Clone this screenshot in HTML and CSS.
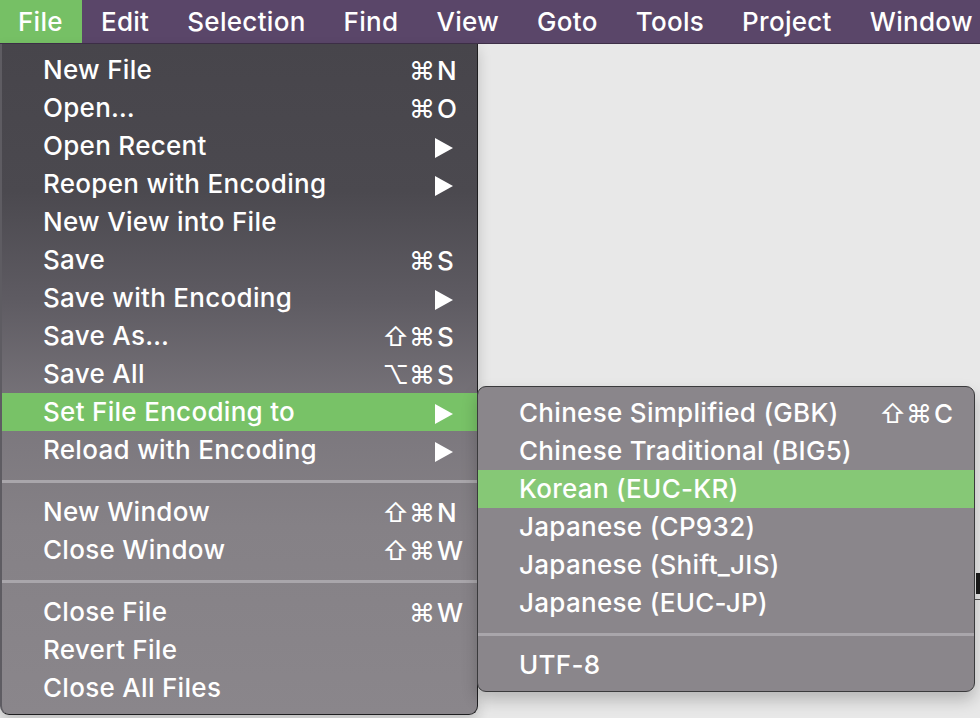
FILE: index.html
```html
<!DOCTYPE html>
<html>
<head>
<meta charset="utf-8">
<link rel="stylesheet" href="styles.css">
</head>
<body>
<div class="menubar">
  <span class="mb-item active">File</span>
  <span class="mb-item">Edit</span>
  <span class="mb-item">Selection</span>
  <span class="mb-item">Find</span>
  <span class="mb-item">View</span>
  <span class="mb-item">Goto</span>
  <span class="mb-item">Tools</span>
  <span class="mb-item">Project</span>
  <span class="mb-item">Window</span>
</div>
<div class="desk">
  <div class="edge-mark"></div>
  <div class="edge-line"></div>

  <div class="menu file-menu">
    <div class="row"><span class="label">New File</span><span class="mods">⌘</span><span class="key">N</span></div>
    <div class="row"><span class="label">Open…</span><span class="mods">⌘</span><span class="key">O</span></div>
    <div class="row"><span class="label">Open Recent</span><span class="mods"></span><span class="key"><i class="arrow"></i></span></div>
    <div class="row"><span class="label">Reopen with Encoding</span><span class="mods"></span><span class="key"><i class="arrow"></i></span></div>
    <div class="row"><span class="label">New View into File</span><span class="mods"></span><span class="key"></span></div>
    <div class="row"><span class="label">Save</span><span class="mods">⌘</span><span class="key">S</span></div>
    <div class="row"><span class="label">Save with Encoding</span><span class="mods"></span><span class="key"><i class="arrow"></i></span></div>
    <div class="row"><span class="label">Save As…</span><span class="mods">⇧⌘</span><span class="key">S</span></div>
    <div class="row"><span class="label">Save All</span><span class="mods">⌥⌘</span><span class="key">S</span></div>
    <div class="row hl"><span class="label">Set File Encoding to</span><span class="mods"></span><span class="key"><i class="arrow"></i></span></div>
    <div class="row"><span class="label">Reload with Encoding</span><span class="mods"></span><span class="key"><i class="arrow"></i></span></div>
    <div class="sep"></div>
    <div class="row"><span class="label">New Window</span><span class="mods">⇧⌘</span><span class="key">N</span></div>
    <div class="row"><span class="label">Close Window</span><span class="mods">⇧⌘</span><span class="key">W</span></div>
    <div class="sep"></div>
    <div class="row"><span class="label">Close File</span><span class="mods">⌘</span><span class="key">W</span></div>
    <div class="row"><span class="label">Revert File</span><span class="mods"></span><span class="key"></span></div>
    <div class="row"><span class="label">Close All Files</span><span class="mods"></span><span class="key"></span></div>
  </div>

  <div class="menu sub-menu">
    <div class="row"><span class="label">Chinese Simplified (GBK)</span><span class="mods">⇧⌘</span><span class="key">C</span></div>
    <div class="row"><span class="label">Chinese Traditional (BIG5)</span><span class="mods"></span><span class="key"></span></div>
    <div class="row hl"><span class="label">Korean (EUC-KR)</span><span class="mods"></span><span class="key"></span></div>
    <div class="row"><span class="label">Japanese (CP932)</span><span class="mods"></span><span class="key"></span></div>
    <div class="row"><span class="label">Japanese (Shift_JIS)</span><span class="mods"></span><span class="key"></span></div>
    <div class="row"><span class="label">Japanese (EUC-JP)</span><span class="mods"></span><span class="key"></span></div>
    <div class="sep"></div>
    <div class="row"><span class="label">UTF-8</span><span class="mods"></span><span class="key"></span></div>
  </div>
</div>
</body>
</html>
```

FILE: styles.css
```css
* { box-sizing: border-box; }
html, body { margin: 0; padding: 0; }
body {
  width: 980px;
  height: 718px;
  overflow: hidden;
  background: #e8e8e8;
  font-family: Inter, "Open Sans", "DejaVu Sans", sans-serif;
  color: #fff;
}

.menubar {
  display: flex;
  height: 44px;
  background: #5a4669;
  border-bottom: 1px solid #3e3048;
  font-size: 26px;
  font-weight: 500;
  letter-spacing: 0.3px;
  align-items: stretch;
}
.mb-item {
  display: flex;
  align-items: center;
  padding: 0 19px 0 19px;
  color: #fff;
}
.mb-item.active {
  background: #76c065;
  padding-left: 18px;
  padding-right: 19px;
}

.desk {
  position: relative;
  height: 674px;
}

.edge-mark {
  position: absolute;
  left: 976px;
  top: 529px;
  width: 4px;
  height: 21px;
  background: #1c1c1c;
}
.edge-line {
  position: absolute;
  left: 960px;
  top: 555px;
  width: 20px;
  height: 1px;
  background: #555;
}

.menu {
  position: absolute;
  font-size: 26px;
  font-weight: 500;
  letter-spacing: 0.3px;
  padding: 7px 0;
}
.file-menu {
  left: 0;
  top: 0;
  width: 478px;
  height: 671px;
  background: linear-gradient(180deg, #47454b 0%, #4b494f 22%, #5e5b62 38%, #7b777d 56%, #858186 72%, #8a868b 100%);
  border-right: 1.5px solid #1e1e20;
  border-bottom: 1.5px solid #1e1e20;
  border-left: 2px solid #5e5c62;
  border-radius: 0 0 9px 9px;
  box-shadow: 0 6px 14px rgba(0,0,0,0.18);
}
.sub-menu {
  left: 477px;
  top: 342px;
  width: 498px;
  height: 306px;
  background: #8a868b;
  border: 1px solid #3a3a3c;
  border-radius: 9px;
  box-shadow: 0 8px 16px rgba(0,0,0,0.22);
}

.row {
  display: grid;
  grid-template-columns: 1fr 90px 40px;
  align-items: center;
  height: 38px;
  padding-left: 41px;
  white-space: nowrap;
}
.sub-menu .row {
  padding-left: 41px;
}
.row.hl { background: #78c267; }
.sub-menu .row.hl { background: #86c876; }

.label { line-height: 38px; }
.mods {
  text-align: right;
  padding-right: 2px;
  letter-spacing: 0;
  font-weight: 400;
}
.key { text-align: left; }

.arrow {
  display: inline-block;
  width: 0;
  height: 0;
  margin-left: -2px;
  border-left: 18px solid #fff;
  border-top: 10px solid transparent;
  border-bottom: 10px solid transparent;
  vertical-align: middle;
}

.sep {
  height: 24px;
  display: flex;
  align-items: center;
}
.sep::before {
  content: "";
  display: block;
  width: 100%;
  height: 3px;
  background: #a9a6ab;
}
```
